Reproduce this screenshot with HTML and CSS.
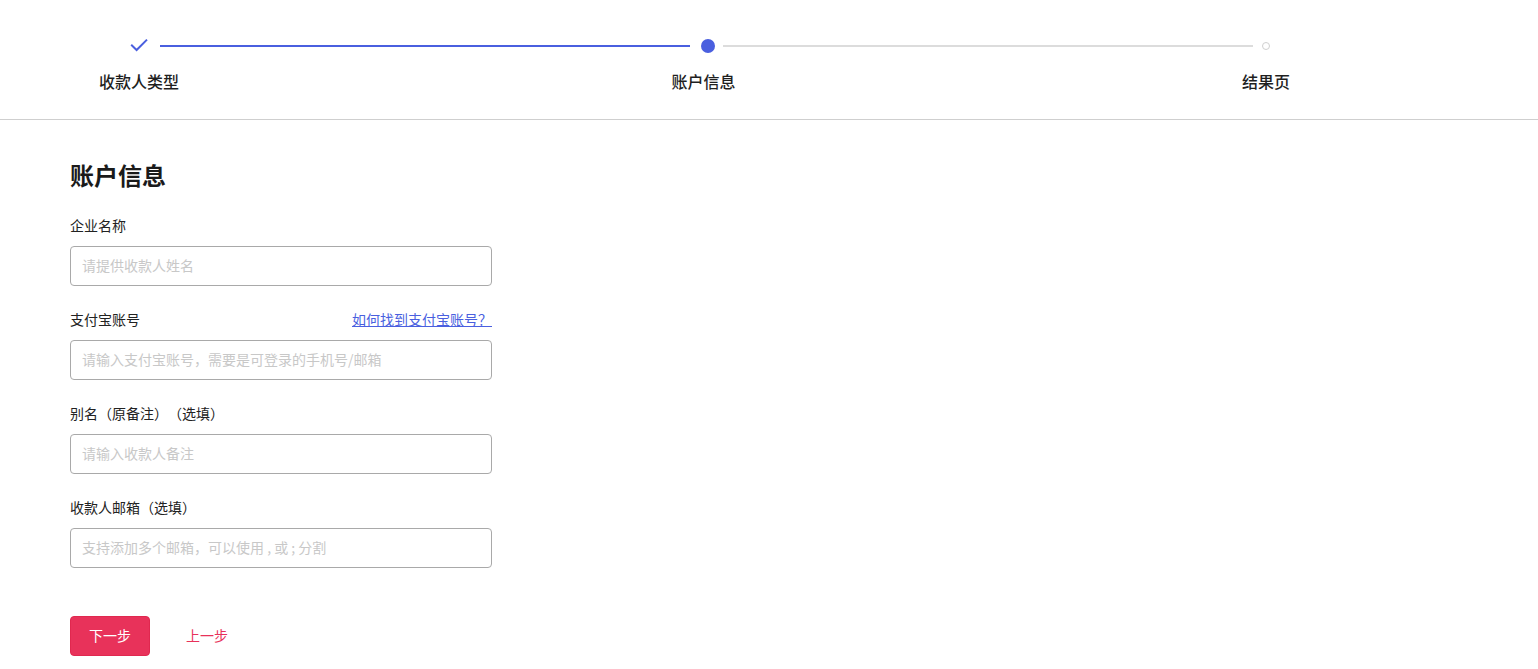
FILE: index.html
```html
<!DOCTYPE html>
<html lang="zh">
<head>
<meta charset="utf-8">
<title>账户信息</title>
<link rel="stylesheet" href="styles.css">
</head>
<body>
<header class="header">
  <div class="steps">
    <div class="step">
      <div class="step-icon">
        <svg width="18" height="14" viewBox="0 0 18 14"><polyline points="1.2,6.8 6.6,12 17,1.6" fill="none" stroke="#4a5fdf" stroke-width="2"/></svg>
      </div>
      <div class="step-label">收款人类型</div>
    </div>
    <div class="step-line done"></div>
    <div class="step step-current">
      <div class="step-icon"><span class="dot"></span></div>
      <div class="step-label">账户信息</div>
    </div>
    <div class="step-line next"></div>
    <div class="step step-last">
      <div class="step-icon"><span class="ring"></span></div>
      <div class="step-label">结果页</div>
    </div>
  </div>
</header>
<main class="form">
  <h1 class="title">账户信息</h1>
  <div class="field">
    <div class="field-label">企业名称</div>
    <input class="input" type="text" placeholder="请提供收款人姓名">
  </div>
  <div class="field">
    <div class="field-label row">
      <span>支付宝账号</span>
      <a class="link" href="#">如何找到支付宝账号？</a>
    </div>
    <input class="input" type="text" placeholder="请输入支付宝账号，需要是可登录的手机号/邮箱">
  </div>
  <div class="field">
    <div class="field-label">别名（原备注）（选填）</div>
    <input class="input" type="text" placeholder="请输入收款人备注">
  </div>
  <div class="field">
    <div class="field-label">收款人邮箱（选填）</div>
    <input class="input" type="text" placeholder="支持添加多个邮箱，可以使用 , 或 ; 分割">
  </div>
  <div class="actions">
    <button class="btn-primary" type="button">下一步</button>
    <button class="btn-text" type="button">上一步</button>
  </div>
</main>
</body>
</html>
```
FILE: styles.css
```css
* { box-sizing: border-box; }
html, body {
  margin: 0;
  padding: 0;
  background: #fff;
  font-family: "Noto Sans CJK SC", "Liberation Sans", sans-serif;
  color: #222;
  text-spacing-trim: space-all;
}
.header {
  height: 120px;
  border-bottom: 1px solid #cfcfcf;
}
.steps {
  display: flex;
  align-items: flex-start;
  padding-left: 130px;
  padding-top: 38px;
}
.step {
  display: flex;
  flex-direction: column;
  align-items: center;
  width: 18px;
}
.step-current { width: 14px; margin-left: 11px; }
.step-current .step-label { margin-right: 9px; }
.step-last { width: 8px; margin-left: 9px; }
.step-icon {
  height: 16px;
  display: flex;
  align-items: center;
  justify-content: center;
}
.step-icon svg { display: block; margin-top: -3px; }
.dot {
  display: block;
  width: 14px;
  height: 14px;
  border-radius: 50%;
  background: #4a5fdf;
}
.ring {
  display: block;
  width: 8px;
  height: 8px;
  border-radius: 50%;
  border: 1px solid #d0d0d0;
}
.step-label {
  margin-top: 15px;
  font-size: 16px;
  line-height: 24px;
  font-weight: 500;
  white-space: nowrap;
  color: #1f1f1f;
}
.step-line {
  height: 2px;
  width: 530px;
  margin-top: 7px;
}
.step-line.done { background: #4a5fdf; margin-left: 12px; }
.step-line.next { background: #dcdcdc; margin-left: 8px; width: 530px; }

.form {
  padding: 39px 70px 0;
}
.title {
  margin: 0;
  font-size: 24px;
  line-height: 32px;
  font-weight: 700;
  color: #1a1a1a;
}
.field { margin-top: 23px; width: 422px; }
.title + .field { margin-top: 24px; }
.field-label {
  font-size: 14px;
  line-height: 20px;
  color: #222;
  margin-bottom: 11px;
}
.field-label.row {
  display: flex;
  justify-content: space-between;
}
.link {
  color: #4a5fdf;
  text-decoration: underline;
}
.input {
  display: block;
  width: 422px;
  height: 40px;
  border: 1px solid #a9a9a9;
  border-radius: 4px;
  padding: 0 11px 2px;
  font-family: inherit;
  font-size: 14px;
  color: #222;
  outline: none;
}
.input::placeholder { color: #c8c8c8; }
.actions {
  margin-top: 48px;
  display: flex;
  align-items: center;
}
.btn-primary {
  width: 80px;
  height: 40px;
  border: 1px solid #e0284f;
  border-radius: 4px;
  background: #e8325a;
  color: #fff;
  font-family: inherit;
  font-size: 14px;
  padding: 0 0 2px;
}
.btn-text {
  margin-left: 36px;
  border: 0;
  background: none;
  padding: 0 0 2px;
  color: #e8325a;
  font-family: inherit;
  font-size: 14px;
}
```
